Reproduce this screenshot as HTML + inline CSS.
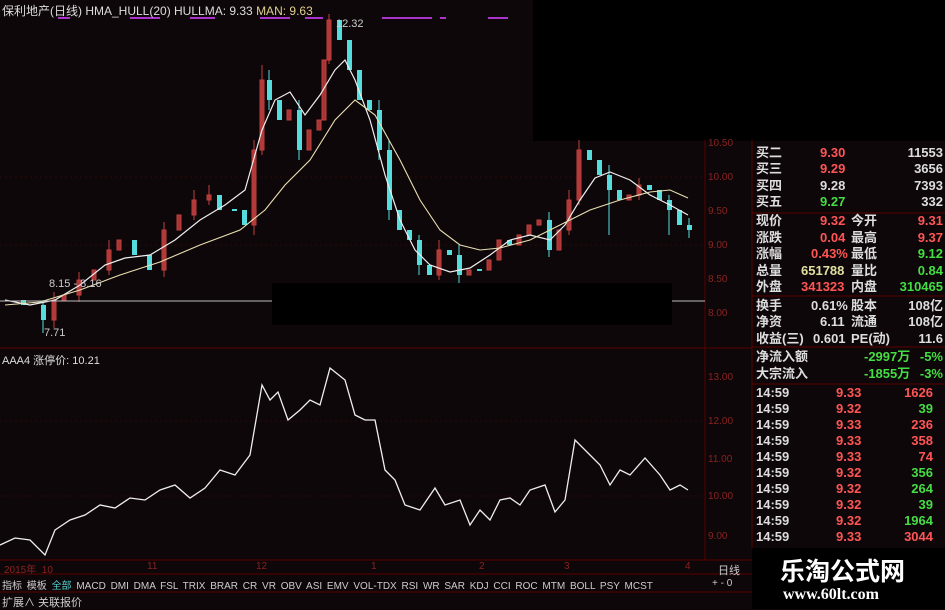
<!DOCTYPE html>
<html><head><meta charset="utf-8"><style>
body{margin:0;background:#0e0709;width:945px;height:609px;overflow:hidden;position:relative;font-family:"Liberation Sans","Noto Sans CJK SC",sans-serif;}
.a{position:absolute;white-space:nowrap;}
.rp{position:absolute;left:756px;width:187px;font-size:13px;font-weight:bold;}
.r{position:absolute;left:0;width:187px;height:16px;line-height:16px;}
.r span{position:absolute;}
.w{color:#ddd}.rd{color:#ff5555}.g{color:#44dd44}.y{color:#e0e0a0}
</style></head><body>
<svg width="945" height="609" style="position:absolute;left:0;top:0">
<rect x="533" y="0" width="412" height="141" fill="#000"/>
<rect x="752" y="548" width="193" height="61" fill="#000"/>
<g stroke="#5a0000" stroke-width="1" fill="none">
<line x1="705" y1="140" x2="705" y2="560"/>
<line x1="752" y1="140" x2="752" y2="548"/>
<line x1="0" y1="348" x2="752" y2="348"/>
<line x1="752" y1="213" x2="945" y2="213"/>
<line x1="752" y1="296" x2="945" y2="296"/>
<line x1="752" y1="347" x2="945" y2="347"/>
<line x1="752" y1="384" x2="945" y2="384"/>
<line x1="0" y1="560" x2="752" y2="560"/>
<line x1="0" y1="574" x2="752" y2="574"/>
<line x1="0" y1="592" x2="752" y2="592"/>
</g>
<g stroke="#2a0808" stroke-width="1" stroke-dasharray="2,3"><line x1="0" y1="177" x2="705" y2="177"/><line x1="0" y1="245" x2="705" y2="245"/><line x1="0" y1="421" x2="705" y2="421"/><line x1="0" y1="496" x2="705" y2="496"/></g>
<g fill="#aa33cc"><rect x="58" y="17" width="12" height="2"/><rect x="130" y="17" width="30" height="2"/><rect x="190" y="17" width="25" height="2"/><rect x="260" y="17" width="30" height="2"/><rect x="305" y="17" width="18" height="2"/><rect x="382" y="17" width="50" height="2"/><rect x="440" y="17" width="6" height="2"/><rect x="488" y="17" width="20" height="2"/></g>
<g stroke="#c04040" stroke-width="1" fill="#a83434">
<path d="M52,300h4v20h-4z M62,295h4v5h-4z M77,280h4v15h-4z M92,270h4v10h-4z M107,250h4v20h-4z M117,240h4v10h-4z M162,230h4v40h-4z M177,215h4v15h-4z M192,200h4v15h-4z M207,195h4v5h-4z M252,150h4v75h-4z M260,80h4v70h-4z M287,110h4v10h-4z M307,130h4v20h-4z M317,120h4v10h-4z M322,60h4v60h-4z M327,20h4v40h-4z M437,250h4v25h-4z M467,270h4v5h-4z M487,260h4v10h-4z M497,240h4v20h-4z M517,235h4v10h-4z M527,225h4v10h-4z M537,220h4v5h-4z M557,230h4v20h-4z M567,200h4v30h-4z M577,150h4v50h-4z M627,195h4v5h-4z M637,185h4v10h-4z"/>
<path fill="none" d="M54,292v36 M79,272v30 M109,240v35 M164,222v55 M254,140v95 M262,65v90 M329,14v50 M439,240v40 M569,190v45 M579,140v65 M639,178v22 M209,185v20 M194,190v30"/>
</g>
<g fill="#55dddd">
<path d="M21,300h5v5h-5z M41,305h5v15h-5z M132,240h5v15h-5z M147,255h5v15h-5z M217,195h5v15h-5z M232,209h5v2h-5z M242,210h5v15h-5z M267,80h5v20h-5z M277,100h5v20h-5z M297,110h5v40h-5z M337,20h5v20h-5z M347,40h5v30h-5z M357,70h5v30h-5z M367,100h5v10h-5z M377,110h5v40h-5z M387,150h5v60h-5z M397,210h5v20h-5z M407,230h5v10h-5z M417,240h5v25h-5z M427,265h5v10h-5z M447,250h5v5h-5z M457,255h5v20h-5z M477,269h5v2h-5z M507,240h5v5h-5z M547,220h5v30h-5z M587,150h5v10h-5z M597,160h5v15h-5z M607,175h5v15h-5z M617,190h5v10h-5z M647,185h5v5h-5z M657,190h5v10h-5z M667,200h5v10h-5z M677,210h5v15h-5z M687,225h5v5h-5z"/>
</g>
<g stroke="#55dddd" stroke-width="1"><path d="M43,300v33 M389,140v80 M419,235v40 M459,245v40 M549,212v45 M269,70v40 M299,100v60 M379,100v60 M609,165v70 M669,195v40 M689,218v20"/></g>
<polyline fill="none" stroke="#eee" stroke-width="1.2" points="5,300 30,305 55,300 80,285 105,265 125,258 150,255 175,240 200,220 225,205 245,190 262,130 275,100 290,92 305,115 320,95 335,70 345,60 355,80 370,120 385,175 400,220 415,250 430,265 450,272 470,268 490,255 510,240 530,235 550,240 565,225 580,200 595,178 610,172 630,180 650,195 670,205 688,215"/>
<polyline fill="none" stroke="#e8e0b0" stroke-width="1.1" points="5,305 40,302 80,290 120,275 160,262 200,245 240,230 265,210 285,185 310,160 335,120 355,100 375,115 400,160 420,200 440,230 460,245 480,250 500,248 530,240 560,225 590,210 620,200 650,192 670,190 688,198"/>
<line x1="0" y1="301" x2="705" y2="301" stroke="#bbb" stroke-width="1"/>
<rect x="272" y="283" width="400" height="42" fill="#000"/>
<polyline fill="none" stroke="#eee" stroke-width="1.3" points="0,545 15,538 30,540 45,555 55,530 70,520 85,515 100,505 115,508 130,498 145,500 160,490 175,485 190,498 205,488 220,470 235,475 250,455 262,385 270,400 278,392 288,420 300,410 310,400 320,405 330,368 345,380 355,415 365,420 375,420 385,470 395,480 405,505 420,510 435,488 445,505 460,500 470,525 480,510 490,520 500,500 510,498 520,505 530,490 545,485 555,512 565,500 575,440 590,455 600,465 610,485 620,470 630,475 645,458 660,475 670,490 680,485 688,490"/>
</svg>
<div class="a" style="left:2px;top:2px;font-size:12px;color:#ddd">保利地产(日线) HMA_HULL(20) HULLMA: 9.33 <span style="color:#e0d090">MAN: 9.63</span></div>
<div class="a" style="left:336px;top:18px;font-size:11px;color:#ccc">12.32</div>
<div class="a" style="left:49px;top:278px;font-size:11px;color:#ccc">8.15 - 8.16</div>
<div class="a" style="left:44px;top:327px;font-size:11px;color:#ccc">7.71</div>
<div class="a" style="left:2px;top:352px;font-size:11px;color:#ddd">AAA4 涨停价: 10.21</div>
<div style="position:absolute;left:708px;top:0;font-size:10px;color:#882222">
<div class="a" style="top:138px">10.50</div><div class="a" style="top:172px">10.00</div><div class="a" style="top:206px">9.50</div><div class="a" style="top:240px">9.00</div><div class="a" style="top:274px">8.50</div><div class="a" style="top:308px">8.00</div>
<div class="a" style="top:372px">13.00</div><div class="a" style="top:416px">12.00</div><div class="a" style="top:454px">11.00</div><div class="a" style="top:491px">10.00</div><div class="a" style="top:531px">9.00</div></div>
<div class="a" style="left:4px;top:561px;font-size:10px;color:#882222">2015年 &nbsp;10<span style="position:absolute;left:143px">11</span><span style="position:absolute;left:252px">12</span><span style="position:absolute;left:367px">1</span><span style="position:absolute;left:475px">2</span><span style="position:absolute;left:560px">3</span><span style="position:absolute;left:681px">4</span></div>
<div class="a" style="left:2px;top:577px;font-size:10px;color:#ccc;word-spacing:2px">指标 模板 <span style="color:#5cc">全部</span> MACD DMI DMA FSL TRIX BRAR CR VR OBV ASI EMV VOL-TDX RSI WR SAR KDJ CCI ROC MTM BOLL PSY MCST</div>
<div class="a" style="left:2px;top:594px;font-size:11px;color:#ccc">扩展∧ 关联报价</div>
<div class="a" style="left:718px;top:562px;font-size:11px;color:#ccc">日线</div>
<div class="a" style="left:712px;top:578px;font-size:10px;color:#ccc">+ - 0</div>
<div class="rp" style="top:145px">
<div class="r" style="top:0"><span class="w">买二</span><span class="rd" style="left:64px">9.30</span><span class="w" style="right:0">11553</span></div>
<div class="r" style="top:16px"><span class="w">买三</span><span class="rd" style="left:64px">9.29</span><span class="w" style="right:0">3656</span></div>
<div class="r" style="top:33px"><span class="w">买四</span><span class="w" style="left:64px">9.28</span><span class="w" style="right:0">7393</span></div>
<div class="r" style="top:49px"><span class="w">买五</span><span class="g" style="left:64px">9.27</span><span class="w" style="right:0">332</span></div>
<div class="r" style="top:68px"><span class="w">现价</span><span class="rd" style="left:64px">9.32</span><span class="w" style="left:95px">今开</span><span class="rd" style="right:0">9.31</span></div>
<div class="r" style="top:85px"><span class="w">涨跌</span><span class="rd" style="left:64px">0.04</span><span class="w" style="left:95px">最高</span><span class="rd" style="right:0">9.37</span></div>
<div class="r" style="top:101px"><span class="w">涨幅</span><span class="rd" style="left:55px">0.43%</span><span class="w" style="left:95px">最低</span><span class="g" style="right:0">9.12</span></div>
<div class="r" style="top:118px"><span class="w">总量</span><span class="y" style="left:45px">651788</span><span class="w" style="left:95px">量比</span><span class="g" style="right:0">0.84</span></div>
<div class="r" style="top:134px"><span class="w">外盘</span><span class="rd" style="left:45px">341323</span><span class="w" style="left:95px">内盘</span><span class="g" style="right:0">310465</span></div>
<div class="r" style="top:153px"><span class="w">换手</span><span class="w" style="left:55px">0.61%</span><span class="w" style="left:95px">股本</span><span class="w" style="right:0">108亿</span></div>
<div class="r" style="top:169px"><span class="w">净资</span><span class="w" style="left:64px">6.11</span><span class="w" style="left:95px">流通</span><span class="w" style="right:0">108亿</span></div>
<div class="r" style="top:186px"><span class="w">收益(三)</span><span class="w" style="left:57px">0.601</span><span class="w" style="left:95px">PE(动)</span><span class="w" style="right:0">11.6</span></div>
<div class="r" style="top:204px"><span class="w">净流入额</span><span class="g" style="left:108px">-2997万</span><span class="g" style="right:0">-5%</span></div>
<div class="r" style="top:221px"><span class="w">大宗流入</span><span class="g" style="left:108px">-1855万</span><span class="g" style="right:0">-3%</span></div>
</div>
<div class="rp" style="top:385px">
<div class="r" style="top:0"><span class="w">14:59</span><span class="rd" style="left:80px">9.33</span><span class="rd" style="right:10px">1626</span></div>
<div class="r" style="top:16px"><span class="w">14:59</span><span class="rd" style="left:80px">9.32</span><span class="g" style="right:10px">39</span></div>
<div class="r" style="top:32px"><span class="w">14:59</span><span class="rd" style="left:80px">9.33</span><span class="rd" style="right:10px">236</span></div>
<div class="r" style="top:48px"><span class="w">14:59</span><span class="rd" style="left:80px">9.33</span><span class="rd" style="right:10px">358</span></div>
<div class="r" style="top:64px"><span class="w">14:59</span><span class="rd" style="left:80px">9.33</span><span class="rd" style="right:10px">74</span></div>
<div class="r" style="top:80px"><span class="w">14:59</span><span class="rd" style="left:80px">9.32</span><span class="g" style="right:10px">356</span></div>
<div class="r" style="top:96px"><span class="w">14:59</span><span class="rd" style="left:80px">9.32</span><span class="g" style="right:10px">264</span></div>
<div class="r" style="top:112px"><span class="w">14:59</span><span class="rd" style="left:80px">9.32</span><span class="g" style="right:10px">39</span></div>
<div class="r" style="top:128px"><span class="w">14:59</span><span class="rd" style="left:80px">9.32</span><span class="g" style="right:10px">1964</span></div>
<div class="r" style="top:144px"><span class="w">14:59</span><span class="rd" style="left:80px">9.33</span><span class="rd" style="right:10px">3044</span></div>
</div>
<div class="a" style="left:780px;top:555px;font-size:25px;font-weight:bold;color:#fff;font-family:'Noto Sans CJK SC',sans-serif;line-height:30px">乐淘公式网</div>
<div class="a" style="left:783px;top:586px;font-size:16px;font-weight:bold;color:#fff;font-family:'Liberation Serif',serif">www.60lt.com</div>
</body></html>
